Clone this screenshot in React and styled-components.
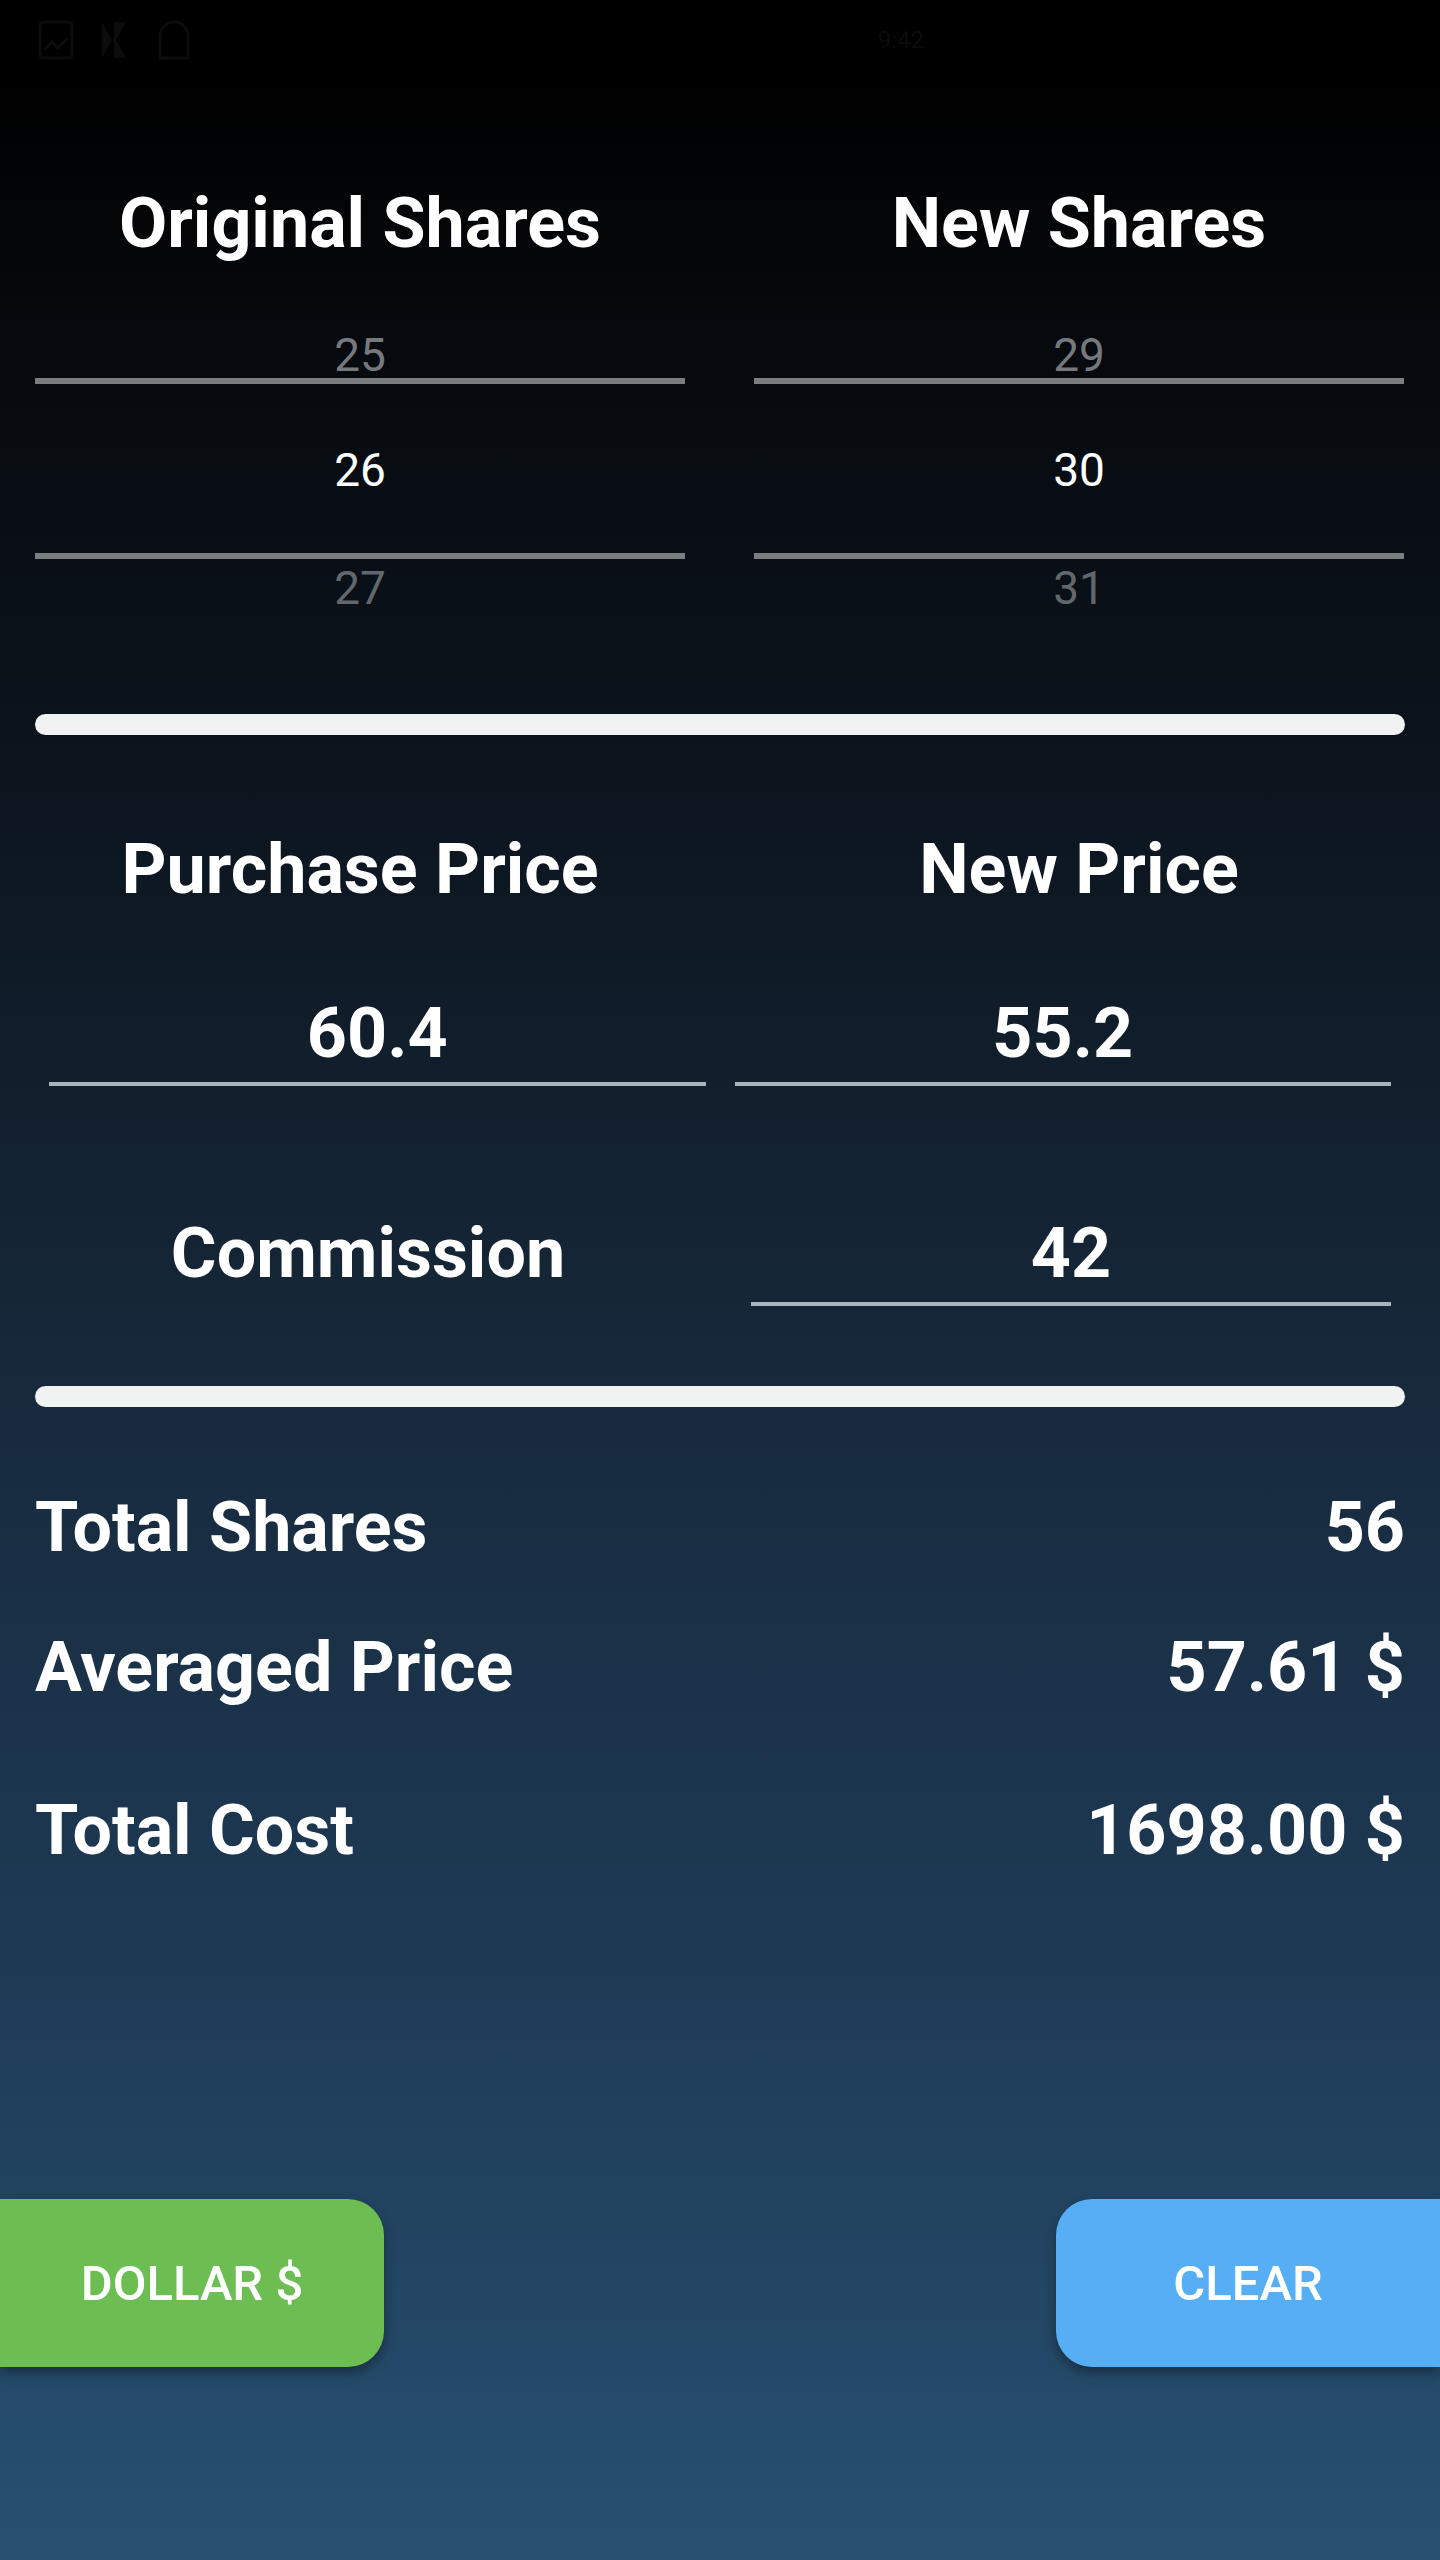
import React from "react";
import styled, { createGlobalStyle } from "styled-components";

const GlobalStyle = createGlobalStyle`
  * {
    box-sizing: border-box;
  }
  body {
    margin: 0;
    font-family: Roboto, "Liberation Sans", Arial, sans-serif;
    background: #000;
  }
`;

const Screen = styled.div`
  width: 1440px;
  min-height: 2560px;
  display: flex;
  flex-direction: column;
  background: linear-gradient(
    180deg,
    #000000 0%,
    #000000 3%,
    #070b10 15%,
    #0c141d 30%,
    #172a3d 55%,
    #1e3a55 76%,
    #275071 100%
  );
  color: #ffffff;
  overflow: hidden;
`;

const StatusBar = styled.div`
  height: 80px;
  display: flex;
  align-items: center;
  justify-content: space-between;
  padding: 0 36px;
  background: #000000;
  color: #0c0c0c;
`;

const StatusIcons = styled.div`
  display: flex;
  align-items: center;
  gap: 24px;
`;

const StatusClock = styled.span`
  font-size: 24px;
  margin-right: 480px;
  color: #0b0b0b;
`;

const TwoColumns = styled.div`
  display: grid;
  grid-template-columns: 1fr 1fr;
  column-gap: 69px;
  padding: ${(p) => p.$top || 0}px 36px 0 35px;
`;

const Column = styled.div`
  display: flex;
  flex-direction: column;
  align-items: stretch;
`;

const Heading = styled.h2`
  margin: 0;
  font-size: 70px;
  line-height: 82px;
  font-weight: 700;
  text-align: center;
  color: #ffffff;
`;

const Picker = styled.div`
  display: flex;
  flex-direction: column;
  margin-top: 68px;
`;

const PickerItem = styled.div`
  font-size: 46px;
  line-height: 46px;
  height: 46px;
  text-align: center;
  color: ${(p) => p.$tone};
  margin-top: ${(p) => p.$offset || 0}px;
`;

const PickerSelected = styled.div`
  height: 169px;
  display: flex;
  align-items: center;
  justify-content: center;
  font-size: 46px;
  color: #ffffff;
  padding-top: 3px;
`;

const PickerDivider = styled.div`
  height: 6px;
  background: #7a7d80;
`;

const ThickBar = styled.div`
  height: 21px;
  margin: ${(p) => p.$top}px 35px 0;
  border-radius: 11px;
  background: #f1f2f2;
`;

const InputRow = styled.div`
  display: grid;
  grid-template-columns: ${(p) => p.$cols};
  column-gap: ${(p) => p.$gap}px;
  align-items: end;
  padding: 0 49px 0 ${(p) => p.$left}px;
  margin-top: ${(p) => p.$top}px;
`;

const Label = styled.div`
  font-size: 70px;
  line-height: 82px;
  font-weight: 700;
  text-align: center;
  padding-bottom: 12px;
`;

const NumberField = styled.input`
  display: block;
  width: 100%;
  height: 82px;
  padding: 0 0 8px;
  border: 0;
  border-bottom: 4px solid #aab4bc;
  background: transparent;
  color: #ffffff;
  font-family: Roboto, "Liberation Sans", Arial, sans-serif;
  font-size: 70px;
  font-weight: 700;
  line-height: 82px;
  text-align: center;
  outline: none;
  box-sizing: content-box;
`;

const ResultRow = styled.div`
  display: flex;
  justify-content: space-between;
  align-items: baseline;
  padding: 0 35px;
  margin-top: ${(p) => p.$top}px;
  font-size: 70px;
  line-height: 82px;
  font-weight: 700;
`;

const ButtonBar = styled.div`
  display: flex;
  justify-content: space-between;
  margin-top: 328px;
`;

const ActionButton = styled.button`
  width: 384px;
  height: 168px;
  border: 0;
  border-radius: ${(p) => (p.$side === "left" ? "0 36px 36px 0" : "36px 0 0 36px")};
  background: ${(p) => p.$color};
  color: #ffffff;
  font-family: Roboto, "Liberation Sans", Arial, sans-serif;
  font-size: 49px;
  font-weight: 500;
  text-transform: uppercase;
  box-shadow: 0 6px 12px rgba(0, 0, 0, 0.35);
  cursor: pointer;
`;

const pickers = [
  { title: "Original Shares", values: [25, 26, 27] },
  { title: "New Shares", values: [29, 30, 31] }
];

const results = [
  { label: "Total Shares", value: "56", top: 79 },
  { label: "Averaged Price", value: "57.61 $", top: 58 },
  { label: "Total Cost", value: "1698.00 $", top: 81 }
];

const App = () => {
  return (
    <>
      <GlobalStyle />
      <Screen>
        <StatusBar>
          <StatusIcons>
            <svg width="40" height="40" viewBox="0 0 40 40" fill="none" stroke="currentColor" strokeWidth="3">
              <rect x="4" y="2" width="32" height="36" rx="3" />
              <path d="M8 30 L16 22 L22 28 L32 18" />
            </svg>
            <svg width="28" height="40" viewBox="0 0 28 40" fill="currentColor">
              <path d="M2 2 L12 20 L2 38 Z M14 2 L26 2 L16 20 L26 38 L14 38 Z" />
            </svg>
            <svg width="44" height="40" viewBox="0 0 44 40" fill="none" stroke="currentColor" strokeWidth="3">
              <path d="M8 38 V16 a14 14 0 0 1 28 0 V38 Z" />
            </svg>
          </StatusIcons>
          <StatusClock>9:42</StatusClock>
        </StatusBar>

        <TwoColumns $top={102}>
          {pickers.map((p) => (
            <Column key={p.title}>
              <Heading>{p.title}</Heading>
              <Picker>
                <PickerItem $tone="#75797d">{p.values[0]}</PickerItem>
                <PickerDivider />
                <PickerSelected>{p.values[1]}</PickerSelected>
                <PickerDivider />
                <PickerItem $tone="#62676c" $offset={6}>
                  {p.values[2]}
                </PickerItem>
              </Picker>
            </Column>
          ))}
        </TwoColumns>

        <ThickBar $top={103} />

        <TwoColumns $top={93}>
          <Heading>Purchase Price</Heading>
          <Heading>New Price</Heading>
        </TwoColumns>

        <InputRow $cols="1fr 1fr" $gap={29} $left={49} $top={82}>
          <NumberField readOnly value="60.4" />
          <NumberField readOnly value="55.2" />
        </InputRow>

        <InputRow $cols="1fr 640px" $gap={50} $left={35} $top={126}>
          <Label>Commission</Label>
          <NumberField readOnly value="42" />
        </InputRow>

        <ThickBar $top={80} />

        {results.map((r) => (
          <ResultRow key={r.label} $top={r.top}>
            <span>{r.label}</span>
            <span>{r.value}</span>
          </ResultRow>
        ))}

        <ButtonBar>
          <ActionButton $side="left" $color="#6cbd52">
            Dollar $
          </ActionButton>
          <ActionButton $side="right" $color="#56aef5">
            Clear
          </ActionButton>
        </ButtonBar>
      </Screen>
    </>
  );
};

export default App;
